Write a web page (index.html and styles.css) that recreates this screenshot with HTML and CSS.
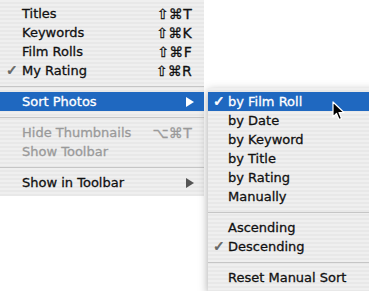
FILE: index.html
```html
<!DOCTYPE html>
<html lang="en">
<head>
    <meta charset="UTF-8">
    <title>Sort Photos menu</title>
    <link rel="stylesheet" href="styles.css">
</head>
<body>
    <div class="stage">
        <ul class="menu main-menu">
            <li class="item"><span class="label">Titles</span><span class="keys">⇧⌘T</span></li>
            <li class="item"><span class="label">Keywords</span><span class="keys">⇧⌘K</span></li>
            <li class="item"><span class="label">Film Rolls</span><span class="keys">⇧⌘F</span></li>
            <li class="item checked"><span class="label">My Rating</span><span class="keys">⇧⌘R</span></li>
            <li class="sep"></li>
            <li class="item active"><span class="label">Sort Photos</span><span class="arrow"></span></li>
            <li class="sep"></li>
            <li class="item disabled"><span class="label">Hide Thumbnails</span><span class="keys">⌥⌘T</span></li>
            <li class="item disabled"><span class="label">Show Toolbar</span></li>
            <li class="sep"></li>
            <li class="item"><span class="label">Show in Toolbar</span><span class="arrow"></span></li>
        </ul>

        <ul class="menu sub-menu">
            <li class="item active checked"><span class="label">by Film Roll</span></li>
            <li class="item"><span class="label">by Date</span></li>
            <li class="item"><span class="label">by Keyword</span></li>
            <li class="item"><span class="label">by Title</span></li>
            <li class="item"><span class="label">by Rating</span></li>
            <li class="item"><span class="label">Manually</span></li>
            <li class="sep"></li>
            <li class="item"><span class="label">Ascending</span></li>
            <li class="item checked"><span class="label">Descending</span></li>
            <li class="sep"></li>
            <li class="item"><span class="label">Reset Manual Sort</span></li>
        </ul>

        <svg class="cursor" width="13" height="20" viewBox="0 0 13 20">
            <path d="M1 1 L1 16 L4.5 12.5 L7 18.5 L9.5 17.5 L7 11.5 L12 11.5 Z" fill="#000" stroke="#fff" stroke-width="1.2" stroke-linejoin="round"/>
        </svg>
    </div>
</body>
</html>
```

FILE: styles.css
```css
body {
    margin: 0;
    background: #fff;
    font-family: "DejaVu Sans", sans-serif;
    font-size: 13px;
    color: #111;
}
.stage {
    display: flex;
    align-items: flex-start;
    gap: 4px;
    width: 369px;
    height: 291px;
    overflow: hidden;
    position: relative;
}
.menu {
    list-style: none;
    margin: 0;
    padding: 4px 0;
    background: repeating-linear-gradient(#efefef 0 2px, #e8e8e8 2px 4px);
    flex-shrink: 0;
    -webkit-text-stroke: 0.3px currentColor;
}
.main-menu {
    width: 204px;
}
.sub-menu {
    width: 175px;
    margin-top: 88px;
    box-shadow: 0 3px 9px rgba(0, 0, 0, 0.35);
}
.item {
    display: flex;
    align-items: center;
    height: 19px;
    padding: 0 12px 0 22px;
    position: relative;
}
.sub-menu .item {
    padding-left: 20px;
}
.label {
    flex: 1;
    white-space: nowrap;
}
.keys {
    font-size: 14px;
    letter-spacing: 0.3px;
}
.checked::before {
    content: "✓";
    position: absolute;
    left: 6px;
    top: 1px;
    font-size: 14px;
    color: #666;
    -webkit-text-stroke: 0.6px #666;
}
.sub-menu .checked::before {
    left: 5px;
}
.active {
    background: #1f68c0;
    color: #fff;
}
.active.checked::before {
    color: #fff;
    -webkit-text-stroke: 0.6px #fff;
}
.disabled {
    color: #9a9a9a;
}
.arrow {
    width: 0;
    height: 0;
    border-top: 5px solid transparent;
    border-bottom: 5px solid transparent;
    border-left: 8px solid #555;
    margin-right: -2px;
}
.active .arrow {
    border-left-color: #fff;
}
.sep {
    height: 12px;
    display: flex;
    align-items: center;
}
.sep::after {
    content: "";
    flex: 1;
    height: 1px;
    background: #c6c6c6;
}
.cursor {
    position: absolute;
    left: 332px;
    top: 101px;
}
```
